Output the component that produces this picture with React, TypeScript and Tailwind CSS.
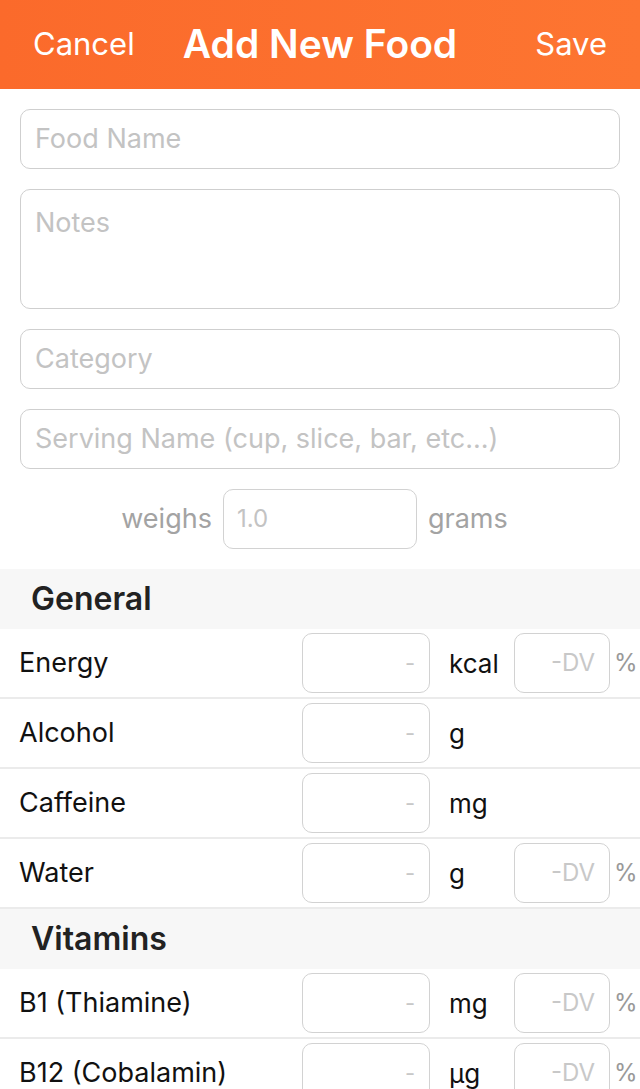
import React from "react";

const font = { fontFamily: "Inter, Roboto, 'Liberation Sans', sans-serif" };

function TextBox({ placeholder, tall }: { placeholder: string; tall?: boolean }) {
  return (
    <div
      className={`mx-5 rounded-[10px] border border-[#cfcfcf] bg-white px-[14px] text-[27px] text-[#c3c3c3] ${
        tall ? "h-[120px] pt-[13px] text-[#a9a9a9]" : "h-[60px] flex items-center"
      }`}
    >
      {placeholder}
    </div>
  );
}

function Row({ label, unit, dv }: { label: string; unit: string; dv: boolean }) {
  return (
    <div className="flex h-[70px] items-center border-b-2 border-[#ebebeb] bg-white">
      <div className="w-[302px] pl-[19px] text-[27px] text-[#111]">{label}</div>
      <div className="flex h-[60px] w-[128px] items-center justify-end rounded-[10px] border border-[#d2d2d2] pr-[14px] text-[22px] text-[#c8c8c8]">
        -
      </div>
      <div className="w-[84px] pl-[19px] text-[26px] text-[#111]">{unit}</div>
      {dv && (
        <>
          <div className="flex h-[60px] w-[96px] items-center justify-end rounded-[10px] border border-[#d2d2d2] pr-[14px] text-[24px] text-[#c8c8c8]">
            -DV
          </div>
          <div className="pl-[4px] text-[24px] text-[#999]">%</div>
        </>
      )}
    </div>
  );
}

function Section({ title }: { title: string }) {
  return (
    <div className="flex h-[60px] items-center bg-[#f7f7f7] pl-[31px] text-[32px] font-semibold text-[#222]">
      {title}
    </div>
  );
}

export default function App() {
  return (
    <div style={font} className="h-[1089px] w-[640px] overflow-hidden bg-white">
      <div className="grid h-[89px] grid-cols-[1fr_auto_1fr] items-center bg-gradient-to-r from-[#fb6a2b] to-[#fd7531] px-[33px] text-white">
        <div className="text-[31px]">Cancel</div>
        <div className="text-center text-[39px] font-semibold">Add New Food</div>
        <div className="text-right text-[31px]">Save</div>
      </div>
      <div className="flex flex-col gap-5 pt-5">
        <TextBox placeholder="Food Name" />
        <TextBox placeholder="Notes" tall />
        <TextBox placeholder="Category" />
        <TextBox placeholder="Serving Name (cup, slice, bar, etc...)" />
        <div className="flex items-center justify-center gap-[11px] pr-[11px] text-[27px] text-[#a3a3a3]">
          <span>weighs</span>
          <div className="flex h-[60px] w-[194px] items-center rounded-[10px] border border-[#d2d2d2] px-[13px] text-[24px] text-[#c3c3c3]">
            1.0
          </div>
          <span>grams</span>
        </div>
      </div>
      <div className="mt-5">
        <Section title="General" />
        <Row label="Energy" unit="kcal" dv />
        <Row label="Alcohol" unit="g" dv={false} />
        <Row label="Caffeine" unit="mg" dv={false} />
        <Row label="Water" unit="g" dv />
        <Section title="Vitamins" />
        <Row label="B1 (Thiamine)" unit="mg" dv />
        <Row label="B12 (Cobalamin)" unit="µg" dv />
      </div>
    </div>
  );
}
